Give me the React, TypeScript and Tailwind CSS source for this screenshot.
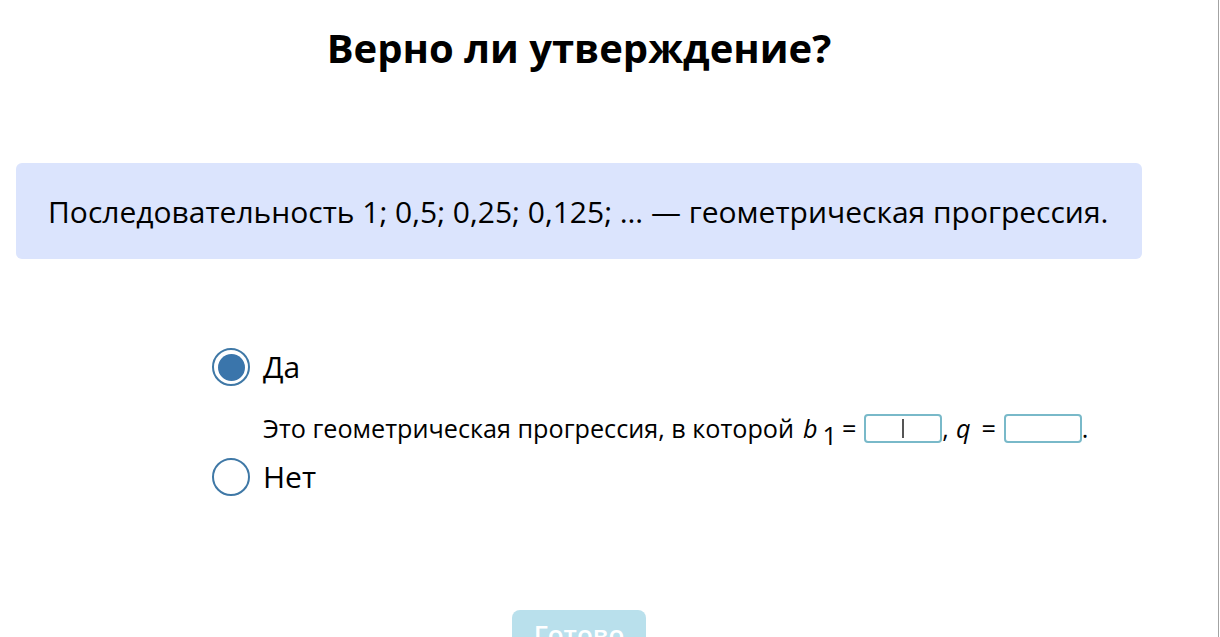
import React, { useState } from "react";

function Radio({ checked }: { checked: boolean }) {
    return (
        <span className="flex items-center justify-center w-[38px] h-[38px] rounded-full border-[2.5px] border-[#3f78a6] bg-white shrink-0">
            {checked && <span className="w-[27px] h-[27px] rounded-full bg-[#3a75ab]"></span>}
        </span>
    );
}

function Field({ caret }: { caret?: boolean }) {
    return (
        <span className="inline-flex items-center justify-center w-[78px] h-[29px] rounded-[4px] border-2 border-[#79b9c9] bg-white">
            {caret && <span className="w-[2px] h-[19px] bg-[#555]"></span>}
        </span>
    );
}

export default function App() {
    const [answer, setAnswer] = useState<"yes" | "no">("yes");

    return (
        <div className="w-[1219px] h-[637px] overflow-hidden bg-white border-r border-[#a3a3a3] text-black font-['Open_Sans',sans-serif]">
            <div className="w-[1158px] px-4 flex flex-col">
                <h1 className="mt-[22px] text-center text-[40px] font-bold leading-[52px]">Верно ли утверждение?</h1>

                <div className="mt-[89px] h-[96px] flex items-center px-8 bg-[#dbe4fd] rounded-[6px] text-[30px]">
                    Последовательность 1; 0,5; 0,25; 0,125; … — геометрическая прогрессия.
                </div>

                <div className="mt-[88px] ml-[196px] flex flex-col">
                    <button className="flex items-center gap-[13px] text-left" onClick={() => setAnswer("yes")}>
                        <Radio checked={answer === "yes"} />
                        <span className="text-[30px] leading-[40px]">Да</span>
                    </button>
                    <div className="ml-[51px] mt-[19px] flex items-center text-[25.2px] leading-[30px] whitespace-nowrap">
                        <span>Это геометрическая прогрессия, в которой</span>
                        <span className="ml-[9px] italic">b</span>
                        <span className="ml-[5px] mt-[14px]">1</span>
                        <span className="ml-[5px] mr-[8px]">=</span>
                        <Field caret />
                        <span>,</span>
                        <span className="ml-[7px] italic">q</span>
                        <span className="ml-[11px] mr-[8px]">=</span>
                        <Field />
                        <span>.</span>
                    </div>
                    <button className="mt-[7px] flex items-center gap-[13px] text-left" onClick={() => setAnswer("no")}>
                        <Radio checked={answer === "no"} />
                        <span className="text-[30px] leading-[40px]">Нет</span>
                    </button>
                </div>

                <div className="mt-[113px] flex justify-center">
                    <button className="w-[134px] h-[48px] rounded-[8px] bg-[#b9e0ec] text-white text-[26px] font-semibold leading-[48px]">Готово</button>
                </div>
            </div>
        </div>
    );
}
